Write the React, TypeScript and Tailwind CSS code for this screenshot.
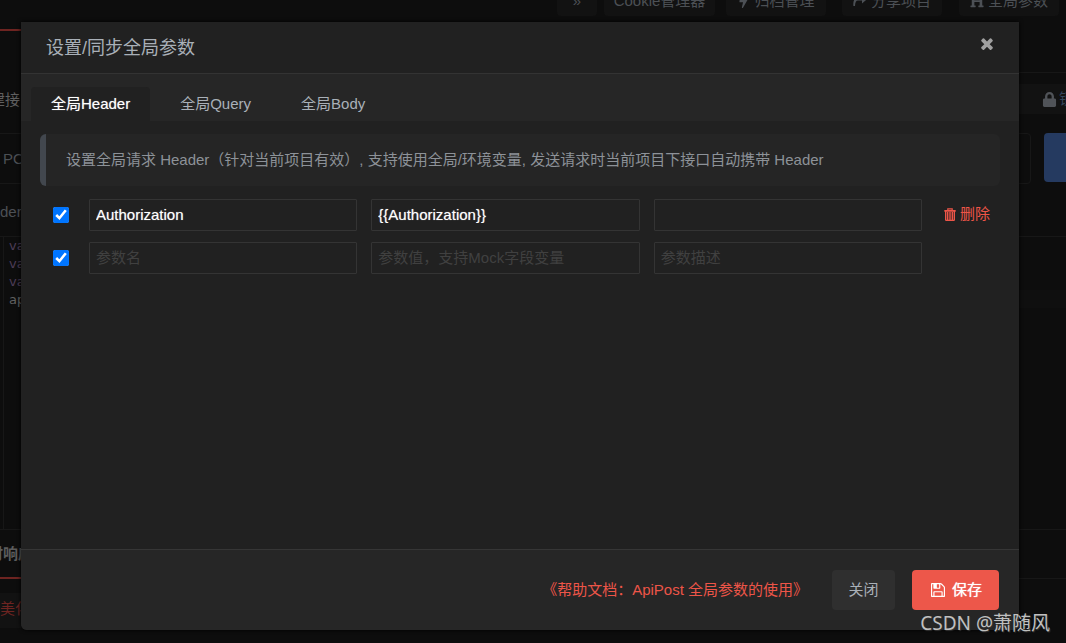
import React from "react";
import { FaBolt, FaLock, FaHeading } from "react-icons/fa";

const toolbarButton =
  "flex h-[30px] items-center justify-center gap-1 rounded bg-[#121212] whitespace-nowrap";

function CloseIcon() {
  return (
    <svg viewBox="302 334 1188 1220" className="h-3 w-3" fill="currentColor" aria-hidden="true">
      <path d="M1490 1322q0 40-28 68l-136 136q-28 28-68 28t-68-28l-294-294-294 294q-28 28-68 28t-68-28l-136-136q-28-28-28-68t28-68l294-294-294-294q-28-28-28-68t28-68l136-136q28-28 68-28t68 28l294 294 294-294q28-28 68-28t68 28l136 136q28 28 28 68t-28 68l-294 294 294 294q28 28 28 68z" />
    </svg>
  );
}

function ShareIcon() {
  return (
    <svg viewBox="0 0 14 14" className="h-[14px] w-[14px]" fill="currentColor" aria-hidden="true">
      <path d="M9 1l5 4.2-5 4.2V6.6H5Q2.2 6.6 2 12H0.4Q-.4 4 5 3.8h4z" />
    </svg>
  );
}

function SaveIcon() {
  return (
    <svg viewBox="0 128 1536 1536" className="h-[14px] w-[14px]" fill="currentColor" aria-hidden="true">
      <path d="M384 1536h768v-384h-768v384zm896 0h128v-896q0-14-10-38.5t-20-34.5l-281-281q-10-10-34-20t-39-10v416q0 40-28 68t-68 28h-576q-40 0-68-28t-28-68v-416h-128v1280h128v-416q0-40 28-68t68-28h832q40 0 68 28t28 68v416zm-384-928v-320q0-13-9.5-22.5t-22.5-9.5h-192q-13 0-22.5 9.5t-9.5 22.5v320q0 13 9.5 22.5t22.5 9.5h192q13 0 22.5-9.5t9.5-22.5zm640 32v928q0 40-28 68t-68 28h-1344q-40 0-68-28t-28-68v-1344q0-40 28-68t68-28h928q40 0 88 20t76 48l280 280q28 28 48 76t20 88z" />
    </svg>
  );
}

function TrashIcon() {
  return (
    <svg viewBox="0 0 12 13" className="h-[13px] w-3" fill="none" stroke="currentColor" aria-hidden="true">
      <path d="M3.8 2.4V.9h4.4v1.5" strokeWidth="1.2" />
      <path d="M.3 2.8h11.4" strokeWidth="1.8" />
      <path d="M1.7 3v8.6q0 .8.8.8h7q.8 0 .8-.8V3" strokeWidth="1.4" />
      <path d="M3.7 4v8M6 4v8M8.3 4v8" strokeWidth="1.4" />
    </svg>
  );
}

function Workspace() {
  return (
    <div className="col-start-1 row-start-1 flex min-w-0 flex-col overflow-hidden text-[15px] leading-5 text-[#4c5055]">
      <div className="-mt-[14px] flex justify-end pr-[7px]">
        <button className={`${toolbarButton} mr-[7px] w-10`}>»</button>
        <button className={`${toolbarButton} mr-[11px] w-[111px]`}>Cookie管理器</button>
        <button className={`${toolbarButton} mr-4 w-[100px]`}>
          <FaBolt size={13} />归档管理
        </button>
        <button className={`${toolbarButton} mr-[17px] w-[100px]`}>
          <ShareIcon />分享项目
        </button>
        <button className={`${toolbarButton} w-[100px]`}>
          <FaHeading size={14} />全局参数
        </button>
      </div>
      <div className="flex flex-1 justify-between">
        <div className="flex w-40 flex-col">
          <div className="h-[15px] border-b-2 border-[#6e2421]" />
          <div className="-ml-[10px] flex h-[102px] items-end pb-[23px] text-[#606060]">建接口</div>
          <div className="flex h-[51px] items-center border-y border-[#171717] pl-[3px]">POST</div>
          <div className="flex h-[53px] items-center border-b border-[#171717] pt-1">der</div>
          <div className="ml-[3px] h-[292px] border-l border-[#171717] pl-[5px] font-['DejaVu_Sans',sans-serif] text-[13px] leading-[18px] text-[#4c3c56]">
            <p>var</p>
            <p>var</p>
            <p>var</p>
            <p className="text-[#606060]">apt</p>
          </div>
          <div className="-ml-3 flex h-[50px] items-center border-t border-b-2 border-b-[#6e2421] border-t-[#171717] font-bold text-[#5c5c5c]">
            时响应
          </div>
          <div className="mt-[14px] flex h-[35px] items-center bg-[#121212] pb-1 text-[#6e2421]">美化</div>
        </div>
        <div className="flex w-40 flex-col">
          <div className="h-[57px] border-b border-[#171717]" />
          <div className="mt-[11px] flex h-[30px] items-center gap-[2px] bg-[#121212] pl-[136px] text-[#34465c]">
            <FaLock size={15} className="shrink-0 text-[#505358]" />
            <span>锁</span>
          </div>
          <div className="mt-[19px] flex h-[51px] items-start">
            <div className="h-full w-[125px] rounded border border-[#171717]" />
            <button className="ml-[13px] h-[49px] flex-1 rounded-l bg-[#253a60]" aria-label="发送" />
          </div>
          <div className="h-[53px] border-b border-[#171717]" />
          <div className="mt-[53px] h-[18px] bg-[#0f0f0f]" />
          <div className="mt-[221px] border-t border-[#171717]" />
          <div className="mt-12 border-t border-[#171717]" />
        </div>
      </div>
    </div>
  );
}

const tabs = ["全局Header", "全局Query", "全局Body"];

const rows = [
  { name: "Authorization", value: "{{Authorization}}", removable: true },
  { name: "", value: "", removable: false },
];

const field =
  "h-8 min-w-0 flex-1 rounded-[1px] border border-[#343434] bg-transparent px-1.5 pb-0.5 text-[15px] text-white outline-none [text-shadow:0_0_1px_#999] placeholder:text-[#404040] placeholder:[text-shadow:none]";

function Dialog() {
  return (
    <div className="z-10 col-start-1 row-start-1 flex min-w-0 pt-[22px] pr-[47px] pb-[13px] pl-[21px]">
      <section
        role="dialog"
        aria-labelledby="dialog-title"
        className="flex min-w-0 flex-1 flex-col overflow-hidden rounded-b-md bg-[#212121] text-[15px] leading-5 text-[#a9b0b8] shadow-[0_0_4px_#000]"
      >
        <header className="flex h-[52px] shrink-0 items-center justify-between border-b border-[#333] pr-[26px] pl-[25px]">
          <h2 id="dialog-title" className="text-[18px] leading-6">设置/同步全局参数</h2>
          <button aria-label="关闭窗口" className="pb-2 text-[#a0a0a0]">
            <CloseIcon />
          </button>
        </header>
        <nav role="tablist" className="flex h-[47px] shrink-0 items-end bg-[#262626] pl-[10px]">
          {tabs.map((tab, i) => (
            <button
              key={tab}
              role="tab"
              aria-selected={i === 0}
              className={
                i === 0
                  ? "mr-[10px] h-[34px] rounded-t bg-[#212121] px-5 text-white [text-shadow:0_0_1px_#999]"
                  : "mr-[10px] h-[34px] px-5"
              }
            >
              {tab}
            </button>
          ))}
        </nav>
        <div className="flex-1 px-[19px] pt-[13px]">
          <p className="flex min-h-[52px] items-center rounded-md border-l-6 border-[#42474e] bg-[#252525] pl-5 text-[#8d9298]">
            设置全局请求 Header（针对当前项目有效）, 支持使用全局/环境变量, 发送请求时当前项目下接口自动携带 Header
          </p>
          <div className="mt-[13px] flex flex-col gap-[11px]">
            {rows.map((row, i) => (
              <div key={i} className="flex items-center pr-[10px] pl-[13px]">
                <input type="checkbox" defaultChecked aria-label="启用参数" className="mr-5 h-4 w-4 shrink-0" />
                <div className="flex min-w-0 flex-1 gap-[14px]">
                  <input className={field} defaultValue={row.name} placeholder="参数名" aria-label="参数名" />
                  <input className={field} defaultValue={row.value} placeholder="参数值，支持Mock字段变量" aria-label="参数值" />
                  <input className={field} placeholder={row.removable ? "" : "参数描述"} aria-label="参数描述" />
                </div>
                <div className="w-[68px] shrink-0 pl-[22px]">
                  {row.removable && (
                    <button className="flex items-center gap-1 pb-0.5 whitespace-nowrap text-[#ed5548]">
                      <TrashIcon />
                      删除
                    </button>
                  )}
                </div>
              </div>
            ))}
          </div>
        </div>
        <footer className="flex h-[81px] shrink-0 items-center justify-end border-t border-[#363636] bg-[#262626] pr-5">
          <a href="#help" className="mr-6 text-[#ed5548]">《帮助文档：ApiPost 全局参数的使用》</a>
          <button className="mr-[17px] h-10 w-[63px] rounded bg-[#2f2f2f]">关闭</button>
          <button className="flex h-10 w-[87px] items-center justify-center gap-[7px] rounded bg-[#ed574a] pl-0.5 text-white [text-shadow:0_0_1px_#fff]">
            <SaveIcon />
            保存
          </button>
        </footer>
      </section>
    </div>
  );
}

export default function App() {
  return (
    <main className="relative grid min-h-screen grid-cols-1 overflow-hidden bg-[#0d0d0d] font-['Liberation_Sans','Noto_Sans_CJK_SC',sans-serif]">
      <Workspace />
      <Dialog />
      <div className="absolute right-4 bottom-1 z-20 font-['Noto_Sans','Noto_Sans_CJK_SC',sans-serif] text-[19px] leading-8 text-[#c0c0c0] [text-shadow:1px_1px_1px_#333]">
        CSDN @萧随风
      </div>
    </main>
  );
}
